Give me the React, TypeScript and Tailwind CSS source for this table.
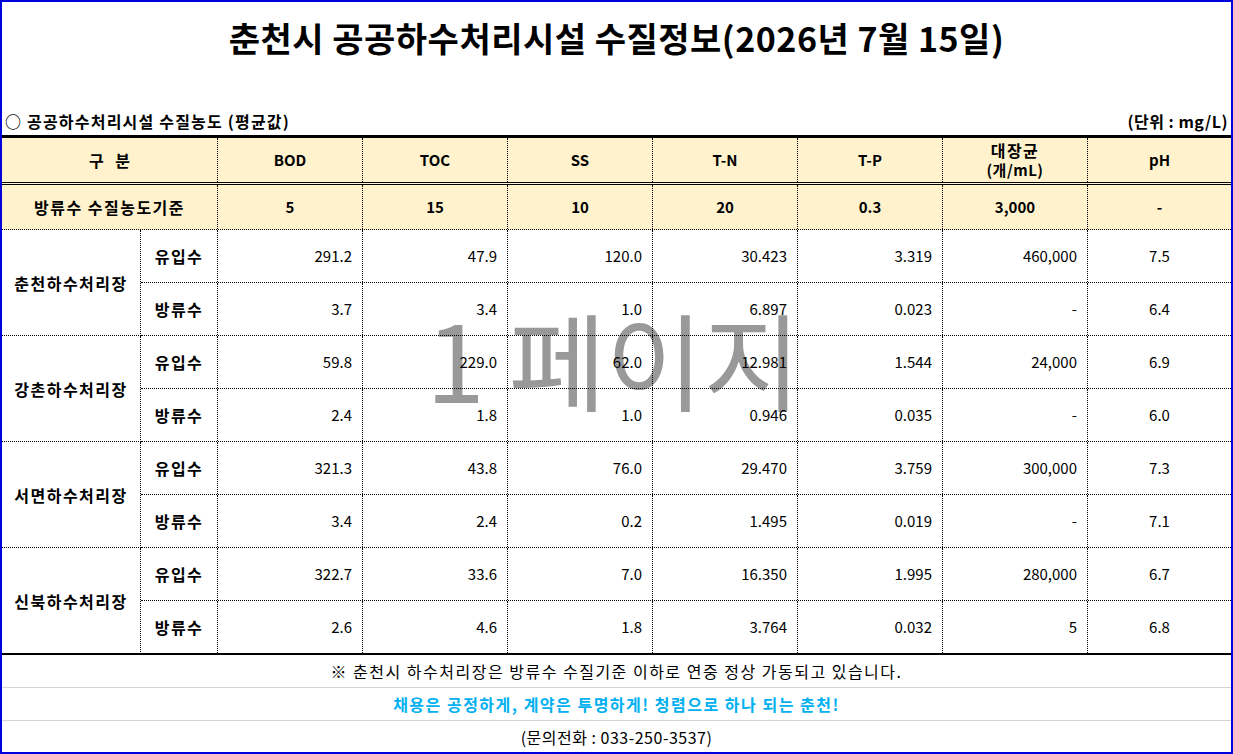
import React from "react";

type Row = { kind: string; values: string[] };
type Plant = { name: string; rows: Row[] };

const plants: Plant[] = [
  {
    name: "춘천하수처리장",
    rows: [
      { kind: "유입수", values: ["291.2", "47.9", "120.0", "30.423", "3.319", "460,000", "7.5"] },
      { kind: "방류수", values: ["3.7", "3.4", "1.0", "6.897", "0.023", "-", "6.4"] },
    ],
  },
  {
    name: "강촌하수처리장",
    rows: [
      { kind: "유입수", values: ["59.8", "229.0", "62.0", "12.981", "1.544", "24,000", "6.9"] },
      { kind: "방류수", values: ["2.4", "1.8", "1.0", "0.946", "0.035", "-", "6.0"] },
    ],
  },
  {
    name: "서면하수처리장",
    rows: [
      { kind: "유입수", values: ["321.3", "43.8", "76.0", "29.470", "3.759", "300,000", "7.3"] },
      { kind: "방류수", values: ["3.4", "2.4", "0.2", "1.495", "0.019", "-", "7.1"] },
    ],
  },
  {
    name: "신북하수처리장",
    rows: [
      { kind: "유입수", values: ["322.7", "33.6", "7.0", "16.350", "1.995", "280,000", "6.7"] },
      { kind: "방류수", values: ["2.6", "4.6", "1.8", "3.764", "0.032", "5", "6.8"] },
    ],
  },
];

const headers = ["BOD", "TOC", "SS", "T-N", "T-P"];
const standards = ["5", "15", "10", "20", "0.3", "3,000", "-"];

const App = () => {
  return (
    <div
      className="relative w-[1233px] h-[754px] bg-white border-2 border-[#0000dd] overflow-hidden text-black"
      style={{ fontFamily: '"Noto Sans CJK KR", "Noto Sans", sans-serif' }}
    >
      {/* page watermark, sits behind the grid */}
      <div className="absolute left-[424px] top-[302px] text-[106px] leading-none text-[#999999] whitespace-nowrap pointer-events-none z-0">
        1 페이지
      </div>

      <div className="relative z-10 flex flex-col">
        <div className="h-[70px] flex items-center justify-center">
          <h1 className="text-[34px] font-bold tracking-[0.5px]">
            춘천시 공공하수처리시설 수질정보(2026년 7월 15일)
          </h1>
        </div>
        <div className="h-[63px] flex items-end justify-between px-[3px] pb-[4px] text-[16px] font-bold leading-5">
          <span className="tracking-[1.2px]">○ 공공하수처리시설 수질농도 (평균값)</span>
          <span className="tracking-[0.5px]">(단위 : mg/L)</span>
        </div>

        <div className="border-t-[3px] border-black">
          {/* header */}
          <div className="grid grid-cols-[216px_repeat(6,145px)_1fr] h-[47px] bg-[#fff2cc] border-b-[3px] border-double border-black text-[15px] font-bold">
            <div className="flex items-center justify-center border-r border-dotted border-black text-[16px] tracking-[4px] pl-[4px]">
              구 분
            </div>
            {headers.map((h) => (
              <div key={h} className="flex items-center justify-center border-r border-dotted border-black">
                {h}
              </div>
            ))}
            <div className="flex flex-col items-center justify-center border-r border-dotted border-black leading-[19px]">
              <span className="text-[16px] tracking-[1.5px]">대장균</span>
              <span className="tracking-[0.5px]">(개/mL)</span>
            </div>
            <div className="flex items-center justify-center">pH</div>
          </div>

          {/* standard */}
          <div className="grid grid-cols-[216px_repeat(6,145px)_1fr] h-[45px] bg-[#fff2cc] border-b border-dotted border-black text-[15px] font-bold">
            <div className="flex items-center justify-center border-r border-dotted border-black text-[16px] tracking-[1.5px]">
              방류수 수질농도기준
            </div>
            {standards.map((s, i) => (
              <div
                key={i}
                className={`flex items-center justify-center ${i < 6 ? "border-r border-dotted border-black" : ""}`}
              >
                {s}
              </div>
            ))}
          </div>

          {/* plants */}
          {plants.map((p) => (
            <div key={p.name} className="flex">
              <div className="w-[139px] h-[106px] flex items-center justify-center border-r border-b border-dotted border-black text-[16px] font-bold tracking-[1.5px]">
                {p.name}
              </div>
              <div className="flex-1 flex flex-col">
                {p.rows.map((r) => (
                  <div
                    key={r.kind}
                    className="grid grid-cols-[77px_repeat(6,145px)_1fr] h-[53px] border-b border-dotted border-black text-[15px]"
                  >
                    <div className="flex items-center justify-center border-r border-dotted border-black font-bold text-[16px] tracking-[1.5px]">
                      {r.kind}
                    </div>
                    {r.values.map((v, i) => (
                      <div
                        key={i}
                        className={
                          i < 6
                            ? "flex items-center justify-end pr-[10px] border-r border-dotted border-black"
                            : "flex items-center justify-center"
                        }
                      >
                        {v}
                      </div>
                    ))}
                  </div>
                ))}
              </div>
            </div>
          ))}
        </div>

        {/* footer notes */}
        <div className="border-t-2 border-black -mt-px">
          <div className="h-[33px] flex items-center justify-center border-b border-[#d4d4d4] text-[16px] tracking-[1.5px]">
            ※ 춘천시 하수처리장은 방류수 수질기준 이하로 연중 정상 가동되고 있습니다.
          </div>
          <div className="h-[33px] flex items-center justify-center border-b border-[#d4d4d4] text-[#00b0f0] font-bold text-[16px] tracking-[1.5px]">
            채용은 공정하게, 계약은 투명하게! 청렴으로 하나 되는 춘천!
          </div>
          <div className="h-[31px] flex items-center justify-center text-[16px] tracking-[0.5px]">
            (문의전화 : 033-250-3537)
          </div>
        </div>
      </div>
    </div>
  );
};

export default App;
